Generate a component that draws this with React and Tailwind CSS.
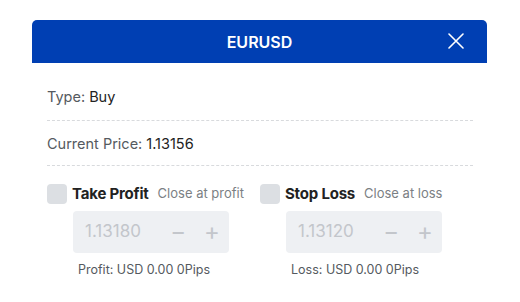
import React from 'react';

const font = { fontFamily: 'Inter, "Liberation Sans", Arial, sans-serif' };

const CloseIcon = () => (
  <svg width="16" height="16" viewBox="0 0 16 16" fill="none" stroke="white" strokeWidth="1.6" strokeLinecap="round">
    <path d="M1 1 L15 15 M15 1 L1 15" />
  </svg>
);

const StopBlock = ({ title, hint, value, note }) => (
  <div className="w-[213px]">
    <div className="flex items-center h-[20px]">
      <span className="w-[20px] h-[20px] rounded-[4px] bg-[#dcdfe3] shrink-0" />
      <span className="ml-[5px] text-[15px] font-bold text-[#222] tracking-[-0.2px]">{title}</span>
      <span className="ml-[9px] text-[13px] text-[#7b7f84]">{hint}</span>
    </div>
    <div className="ml-[26px] mt-[7px] w-[156px] h-[42px] rounded-[4px] bg-[#eef0f3] flex items-center pl-[12px] pr-[9px]">
      <span className="text-[17px] text-[#c3c6cb] flex-1">{value}</span>
      <span className="text-[24px] text-[#c3c6cb] mr-[18px] leading-none">−</span>
      <span className="text-[24px] text-[#c3c6cb] leading-none">+</span>
    </div>
    <div className="ml-[31px] mt-[8px] text-[12.5px] text-[#555a60]">{note}</div>
  </div>
);

export default function App() {
  return (
    <div className="w-[520px] h-[302px] bg-white pt-[20px]" style={font}>
      <div className="ml-[32px] w-[455px]">
        {/* Header */}
        <div className="relative h-[43px] bg-[#003fb3] rounded-t-[5px] flex items-center justify-center">
          <span className="text-white text-[16px] font-semibold">EURUSD</span>
          <button className="absolute right-[23px] top-[13px]">
            <CloseIcon />
          </button>
        </div>

        {/* Body */}
        <div className="px-[15px] pr-[14px]">
          <div className="h-[58px] flex items-center pt-[10px] border-b border-dashed border-[#d8dadd] text-[14.5px]">
            <span className="text-[#555a60]">Type:</span>
            <span className="ml-[4px] text-[#222]">Buy</span>
          </div>
          <div className="h-[45px] flex items-center pt-[1px] text-[14.5px] border-b border-dashed border-[#d8dadd]">
            <span className="text-[#555a60]">Current Price:</span>
            <span className="ml-[4px] text-[#222]">1.13156</span>
          </div>
          <div className="flex mt-[18px]">
            <StopBlock title="Take Profit" hint="Close at profit" value="1.13180" note="Profit: USD 0.00 0Pips" />
            <StopBlock title="Stop Loss" hint="Close at loss" value="1.13120" note="Loss: USD 0.00 0Pips" />
          </div>
        </div>
      </div>
    </div>
  );
}
